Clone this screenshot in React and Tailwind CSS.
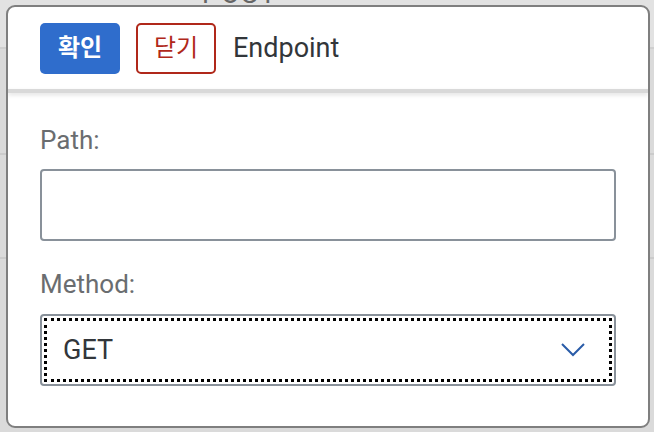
import React from "react";

export default function App() {
  return (
    <div className="relative w-[654px] h-[432px] overflow-hidden bg-[#dadada]" style={{ fontFamily: "Roboto, 'Noto Sans CJK KR', sans-serif" }}>
      {/* background table rows */}
      <div className="flex flex-col">
        <div className="h-[49px] border-b-2 border-[#cfcfcf] bg-[#e2e2e2] flex items-start">
          <span className="ml-[202px] -mt-[19px] text-[27px] leading-[27px] text-[#666] tracking-[2px]">POST</span>
        </div>
        <div className="h-[106px] border-b-2 border-[#cbcbcb]"></div>
        <div className="h-[104px] border-b-2 border-[#cbcbcb]"></div>
      </div>

      {/* dialog */}
      <div className="absolute left-[6px] top-[5px] w-[644px] h-[423px] bg-white border-2 border-[#7f7f7f] rounded-[9px] overflow-hidden flex flex-col">
        <div className="h-[82px] flex items-center gap-4 pl-[32px] shrink-0">
          <button className="w-[80px] h-[51px] rounded-[5px] bg-[#2f6dcc] text-white text-[24px] font-bold flex items-center justify-center">확인</button>
          <button className="w-[80px] h-[51px] rounded-[5px] border-2 border-[#b0281a] text-[#b0281a] text-[24px] flex items-center justify-center">닫기</button>
          <span className="text-[27px] text-[#32363a] ml-[1px]">Endpoint</span>
        </div>
        <div className="h-[4px] bg-[#d9d9d9] shadow-[0_2px_4px_rgba(0,0,0,0.12)] shrink-0"></div>
        <div className="px-[32px] pt-[33px] flex flex-col">
          <label className="text-[26px] text-[#6a6d70] leading-[28px]">Path:</label>
          <div className="mt-[15px] h-[72px] border-2 border-[#89919a] rounded-[4px]"></div>
          <label className="mt-[29px] text-[26px] text-[#6a6d70] leading-[28px]">Method:</label>
          <div className="mt-[16px] h-[72px] border-2 border-[#89919a] rounded-[4px] p-[2px]">
            <div className="h-full border-[3px] border-dotted border-black flex items-center justify-between pl-[16px] pr-[24px]">
              <span className="text-[27px] text-[#32363a]">GET</span>
              <svg width="24" height="14" viewBox="0 0 24 14" fill="none">
                <path d="M1 1 L12 12 L23 1" stroke="#2a5ca8" strokeWidth="2" />
              </svg>
            </div>
          </div>
        </div>
      </div>
    </div>
  );
}
